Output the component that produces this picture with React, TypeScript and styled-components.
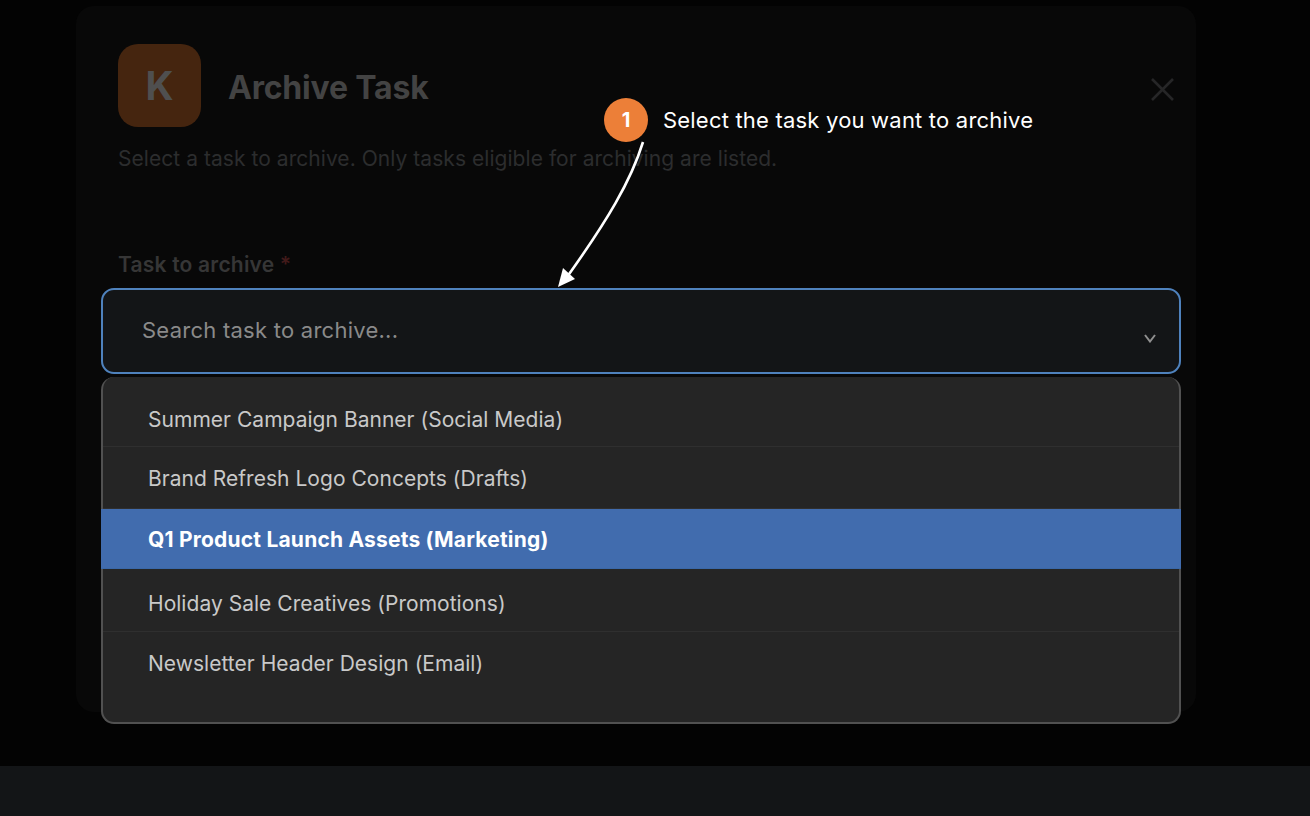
import styled, { createGlobalStyle } from "styled-components";

const tasks = [
    { name: "Summer Campaign Banner (Social Media)", height: 57 },
    { name: "Brand Refresh Logo Concepts (Drafts)", height: 62 },
    { name: "Q1 Product Launch Assets (Marketing)", height: 60 },
    { name: "Holiday Sale Creatives (Promotions)", height: 59 },
    { name: "Newsletter Header Design (Email)", height: 60 },
];
const selectedTask = 2;

const App = () => {
    return (
        <Page>
            <GlobalStyle />
            <Overlay>
                <Modal>
                    <Header>
                        <Logo>K</Logo>
                        <Title>Archive Task</Title>
                        <CloseIcon width="24" height="24" viewBox="0 0 24 24">
                            <path d="M2 2 L23 23 M23 2 L2 23" stroke="#262627" strokeWidth="2.6" fill="none" />
                        </CloseIcon>
                    </Header>
                    <Subtitle>Select a task to archive. Only tasks eligible for archiving are listed.</Subtitle>
                    <Label>
                        Task to archive <Required>*</Required>
                    </Label>
                    <SelectWrap>
                        <SelectBox>
                            <Placeholder>Search task to archive...</Placeholder>
                            <svg width="12" height="9" viewBox="0 0 12 9">
                                <path d="M1 1 L6 7.500 L11 1" stroke="#8f8f8f" strokeWidth="2" fill="none" />
                            </svg>
                        </SelectBox>
                        <Menu>
                            {tasks.map((task, i) => (
                                <MenuItem key={task.name} $selected={i === selectedTask} $height={task.height}>
                                    {task.name}
                                </MenuItem>
                            ))}
                        </Menu>
                    </SelectWrap>
                </Modal>
                <Step>
                    <StepBadge>1</StepBadge>
                    <StepText>Select the task you want to archive</StepText>
                </Step>
                <Arrow width="100" height="150" viewBox="0 0 100 150">
                    <path d="M86 1 C74 40 50 80 10 136" stroke="#fff" strokeWidth="2.600" fill="none" />
                    <path d="M1 146 L6 127 L18 138 Z" fill="#fff" />
                </Arrow>
            </Overlay>
            <Footer />
        </Page>
    );
};

const GlobalStyle = createGlobalStyle`
    html, body {
        margin: 0;
        padding: 0;
        background: #000;
    }
    * {
        box-sizing: border-box;
    }
`;

const Page = styled.div`
    width: 1310px;
    height: 816px;
    display: flex;
    flex-direction: column;
    overflow: hidden;
    font-family: Inter, "Liberation Sans", sans-serif;
`;

const Overlay = styled.div`
    position: relative;
    height: 766px;
    padding: 6px 114px 0 76px;
    background: #030303;
`;

const Footer = styled.div`
    height: 50px;
    background: #131517;
`;

const Modal = styled.div`
    width: 1120px;
    height: 706px;
    padding: 38px 20px 0 42px;
    border-radius: 18px;
    background: #080808;
`;

const Header = styled.div`
    display: flex;
    align-items: center;
`;

const Logo = styled.div`
    width: 83px;
    height: 83px;
    display: flex;
    align-items: center;
    justify-content: center;
    border-radius: 20px;
    background: #45250f;
    color: #4f4f4f;
    font-size: 39px;
    font-weight: 700;
`;

const Title = styled.h2`
    flex: 1;
    margin: 4px 0 0 27px;
    color: #434343;
    font-size: 32px;
    font-weight: 700;
    letter-spacing: -0.2px;
`;

const CloseIcon = styled.svg`
    margin-right: 2px;
    margin-top: 7px;
`;

const Subtitle = styled.p`
    margin: 19px 0 0;
    color: #2c2d2e;
    font-size: 21px;
    letter-spacing: 0.05px;
    line-height: 26px;
`;

const Label = styled.div`
    margin-top: 80px;
    color: #363636;
    font-size: 21px;
    font-weight: 600;
    letter-spacing: 0.2px;
    line-height: 26px;
`;

const Required = styled.span`
    color: #421a1a;
`;

const SelectWrap = styled.div`
    position: relative;
    margin: 10px -5px 0 -17px;
`;

const SelectBox = styled.div`
    height: 86px;
    padding: 0 23px 2px 39px;
    display: flex;
    align-items: center;
    justify-content: space-between;
    border: 2px solid #4f82bd;
    border-radius: 13px;
    background: #131517;

    svg {
        margin-top: 16px;
    }
`;

const Placeholder = styled.span`
    color: #8a8a8a;
    font-size: 22px;
    letter-spacing: 0.25px;
`;

const Menu = styled.div`
    position: absolute;
    top: 89px;
    left: 0;
    right: 0;
    height: 347px;
    padding-top: 13px;
    border: 2px solid #515151;
    border-top: 0;
    border-radius: 13px;
    background: #252525;
`;

const MenuItem = styled.div<{ $selected: boolean; $height: number }>`
    height: ${(p) => p.$height}px;
    margin-left: ${(p) => (p.$selected ? "-2px" : "0")};
    margin-right: ${(p) => (p.$selected ? "-2px" : "0")};
    margin-bottom: ${(p) => (p.$selected ? "4px" : "0")};
    padding-top: 2px;
    padding-left: ${(p) => (p.$selected ? "47px" : "45px")};
    display: flex;
    align-items: center;
    border-bottom: 1px solid ${(p) => (p.$selected ? "#3a68a8" : "#2f2f2f")};
    background: ${(p) => (p.$selected ? "#416cae" : "transparent")};
    color: ${(p) => (p.$selected ? "#fff" : "#c9c9c9")};
    font-size: 21px;
    font-weight: ${(p) => (p.$selected ? 700 : 400)};
    letter-spacing: ${(p) => (p.$selected ? "0.2px" : "0.03px")};

    &:last-child {
        border-bottom: 0;
    }
`;

const Step = styled.div`
    position: absolute;
    top: 98px;
    left: 604px;
    display: flex;
    align-items: center;
    gap: 15px;
`;

const StepBadge = styled.div`
    width: 44px;
    height: 44px;
    display: flex;
    align-items: center;
    justify-content: center;
    border-radius: 50%;
    background: #ec7f38;
    color: #fff;
    font-size: 20px;
    font-weight: 700;
`;

const StepText = styled.span`
    color: #fff;
    font-size: 22px;
    letter-spacing: 0.2px;
`;

const Arrow = styled.svg`
    position: absolute;
    top: 141px;
    left: 557px;
`;

export default App;
